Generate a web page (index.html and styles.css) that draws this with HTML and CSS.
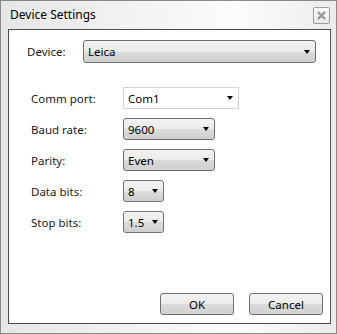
FILE: index.html
```html
<!DOCTYPE html>
<html lang="en">
<head>
  <meta charset="UTF-8">
  <meta name="viewport" content="width=device-width, initial-scale=1.0">
  <title>Device Settings</title>
  <link rel="stylesheet" href="styles.css">
</head>
<body>
  <div class="window">
    <div class="titlebar">
      <span class="title">Device Settings</span>
      <span class="close">
        <svg width="9" height="9" viewBox="0 0 9 9">
          <path d="M1 1 L8 8 M8 1 L1 8" stroke="#7a7a7a" stroke-width="2" fill="none"/>
          <path d="M1 1 L8 8 M8 1 L1 8" stroke="#d8d8d8" stroke-width="0.6" fill="none"/>
        </svg>
      </span>
    </div>
    <div class="panel">
      <div class="device-row">
        <label class="device-label">Device:</label>
        <div class="combo combo-device"><span>Leica</span><i class="arrow"></i></div>
      </div>
      <div class="settings">
        <div class="row">
          <label class="row-label">Comm port:</label>
          <div class="combo combo-edit combo-port"><span>Com1</span><i class="arrow"></i></div>
        </div>
        <div class="row">
          <label class="row-label">Baud rate:</label>
          <div class="combo combo-mid"><span>9600</span><i class="arrow"></i></div>
        </div>
        <div class="row">
          <label class="row-label">Parity:</label>
          <div class="combo combo-mid"><span>Even</span><i class="arrow"></i></div>
        </div>
        <div class="row">
          <label class="row-label">Data bits:</label>
          <div class="combo combo-small"><span>8</span><i class="arrow"></i></div>
        </div>
        <div class="row">
          <label class="row-label">Stop bits:</label>
          <div class="combo combo-small"><span>1.5</span><i class="arrow"></i></div>
        </div>
      </div>
      <div class="buttons">
        <button class="btn">OK</button>
        <button class="btn">Cancel</button>
      </div>
    </div>
  </div>
</body>
</html>
```

FILE: styles.css
```css
body {
  margin: 0;
  padding: 0;
  font-family: 'Segoe UI', 'Noto Sans', 'Open Sans', sans-serif;
  font-size: 11.5px;
  color: #1a1a1a;
  background: #fff;
}
.window {
  width: 337px;
  height: 334px;
  box-sizing: border-box;
  border: 1px solid #8a8a8a;
  background: linear-gradient(90deg, #e6e6e6 0%, #f4f4f4 45%, #fcfcfc 70%, #ececec 100%);
  display: flex;
  flex-direction: column;
}
.titlebar {
  height: 28px;
  display: flex;
  align-items: flex-start;
  flex-shrink: 0;
}
.title {
  padding: 6px 0 0 9px;
  line-height: 16px;
  font-size: 12px;
  color: #000;
}
.close {
  margin: 6px 6px 0 auto;
  width: 15px;
  height: 15px;
  border: 1px solid #9c9c9c;
  border-radius: 2px;
  background: linear-gradient(#fafafa, #e8e8e8);
  display: flex;
  align-items: center;
  justify-content: center;
}
.panel {
  flex: 1;
  margin: 0 5px 9px 7px;
  border: 1px solid #4f4f4f;
  background: #fff;
  display: flex;
  flex-direction: column;
}
.device-row {
  display: flex;
  align-items: center;
  padding: 10px 0 0 18px;
}
.device-label {
  width: 56px;
}
.combo {
  box-sizing: border-box;
  height: 22px;
  border: 1px solid #707070;
  border-radius: 3px;
  background: linear-gradient(#f3f3f3 0%, #ebebeb 50%, #dcdcdc 50%, #d0d0d0 100%);
  display: flex;
  align-items: center;
  padding: 0 5px 0 4px;
  color: #000;
}
.combo span {
  flex: 1;
}
.arrow {
  width: 0;
  height: 0;
  border-top: 4px solid #000;
  border-left: 3px solid transparent;
  border-right: 3px solid transparent;
}
.combo-device {
  width: 233px;
  height: 23px;
}
.combo-edit {
  background: #fff;
  border: 1px solid #d4d4d4;
  border-radius: 0;
}
.combo-port {
  width: 116px;
}
.combo-mid {
  width: 92px;
}
.combo-small {
  width: 41px;
}
.settings {
  margin-top: 24px;
  padding-left: 22px;
  display: flex;
  flex-direction: column;
  gap: 9px;
}
.row {
  display: flex;
  align-items: center;
}
.row-label {
  width: 92px;
}
.buttons {
  margin-top: auto;
  display: flex;
  justify-content: flex-end;
  gap: 15px;
  padding: 0 7px 8px 0;
}
.btn {
  box-sizing: border-box;
  width: 74px;
  height: 22px;
  border: 1px solid #707070;
  border-radius: 3px;
  background: linear-gradient(#f3f3f3 0%, #ebebeb 50%, #dcdcdc 50%, #d0d0d0 100%);
  font-family: inherit;
  font-size: 11.5px;
  color: #000;
  padding: 0;
}
```
